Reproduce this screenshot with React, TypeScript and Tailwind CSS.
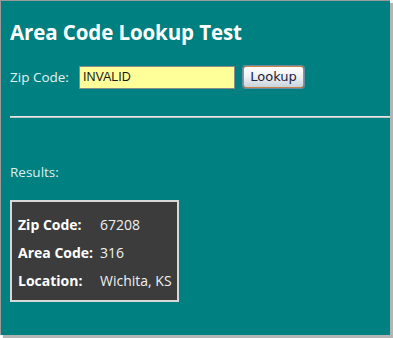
export default function App() {
  return (
    <div className="w-[393px] h-[338px] bg-white relative overflow-hidden">
      <div
        className="w-[390px] h-[335px] bg-[#008080] border-l border-t border-[#9a9a9a] shadow-[3px_3px_1px_#b4b4b4] flex flex-col pl-[9px]"
        style={{ fontFamily: '"Open Sans", "Noto Sans", sans-serif' }}
      >
        <h1 className="mt-[18px] h-[26px] text-[20.5px] leading-[26px] font-bold text-white tracking-[-0.1px]">
          Area Code Lookup Test
        </h1>
        <div className="mt-[20px] flex items-center h-[24px]">
          <span className="text-[13.5px] text-[#e4f2f2] w-[69px]">Zip Code:</span>
          <input
            className="w-[156px] h-[23px] bg-[#ffff99] border border-[#8c8c8c] px-[3px] text-[12.5px] text-[#1a1a1a] outline-none"
            style={{ fontFamily: '"Liberation Sans", Arial, sans-serif' }}
            defaultValue="INVALID"
          />
          <button
            className="ml-[8px] w-[61px] h-[22px] rounded-[3px] border border-[#c9824a] bg-gradient-to-b from-[#ffffff] via-[#eef0f2] to-[#c8d4de] text-[13px] text-[#1b2540] shadow-[0_0_0_1px_#6f8aa0]"
            style={{ fontFamily: '"DejaVu Sans", Tahoma, sans-serif' }}
          >
            Lookup
          </button>
        </div>
        <div className="mt-[27px] h-[2px] bg-[#e6e6e6] border-b border-[#b8c8c8]" />
        <div className="mt-[45px] text-[13.5px] text-[#dcefef] leading-[18px]">Results:</div>
        <div className="mt-[19px] w-[169px] h-[102px] bg-[#3c3c3c] border-2 border-[#d8d8d8] pl-[6px] pt-[12px] flex flex-col gap-[7px] text-[14px]">
          <div className="flex h-[21px] items-center">
            <span className="w-[82px] font-bold text-white">Zip Code:</span>
            <span className="text-[#f0f0f0]">67208</span>
          </div>
          <div className="flex h-[21px] items-center">
            <span className="w-[82px] font-bold text-white">Area Code:</span>
            <span className="text-[#f0f0f0]">316</span>
          </div>
          <div className="flex h-[21px] items-center">
            <span className="w-[82px] font-bold text-white">Location:</span>
            <span className="text-[#f0f0f0]">Wichita, KS</span>
          </div>
        </div>
      </div>
    </div>
  );
}
